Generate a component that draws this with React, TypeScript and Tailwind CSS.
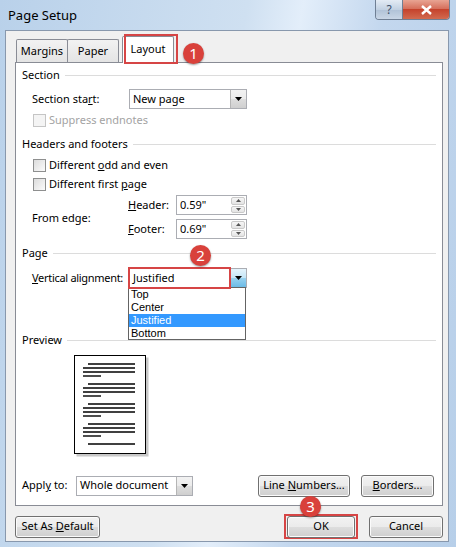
import React from "react";

// Win7-style push button
const Btn = ({ w, children, className = "" }: { w: string; children: React.ReactNode; className?: string }) => (
  <div
    className={`${w} h-[22px] flex items-center justify-center rounded-[3px] border border-[#707070] bg-[linear-gradient(#f2f2f2_0%,#ebebeb_50%,#dddddd_51%,#cfcfcf_100%)] shadow-[inset_0_0_0_1px_#fbfbfb] ${className}`}
  >
    <span>{children}</span>
  </div>
);

const Check = ({ label, disabled = false }: { label: React.ReactNode; disabled?: boolean }) => (
  <div className={`flex items-center h-[16px] ${disabled ? "text-[#a3a3a3]" : ""}`}>
    <div
      className={`w-[13px] h-[13px] border ${disabled ? "border-[#c5c5c5] bg-[#f4f4f4]" : "border-[#8e8f8f] bg-[linear-gradient(135deg,#dcdcdc,#fbfbfb)]"}`}
    />
    <span className="ml-[3px]">{label}</span>
  </div>
);

const Group = ({ label }: { label: string }) => (
  <div className="flex items-center h-[16px] pl-[6px] pr-[6px]">
    <span>{label}</span>
    <div className="flex-1 h-px bg-[#dcdcdc] ml-[5px]" />
  </div>
);

const Arrow = ({ active = false }: { active?: boolean }) => (
  <div
    className={`w-[16px] h-full flex items-center justify-center border-l ${
      active
        ? "border-[#3c7fb1] bg-[linear-gradient(#e5f4fc,#c4e5f6_50%,#98d1ef_51%,#6cbbe6)]"
        : "border-[#b5b5b5] bg-[linear-gradient(#f2f2f2,#ebebeb_50%,#dddddd_51%,#cfcfcf)]"
    }`}
  >
    <svg width="7" height="4" viewBox="0 0 7 4">
      <path d="M0 0H7L3.5 4Z" fill="#000" />
    </svg>
  </div>
);

const Select = ({ w, value, active = false }: { w: string; value: string; active?: boolean }) => (
  <div className={`${w} h-[20px] flex border border-[#abadb3] bg-white`}>
    <div className="flex-1 flex items-center pl-[3px]">{value}</div>
    <Arrow active={active} />
  </div>
);

const Spin = ({ value }: { value: string }) => (
  <div className="w-[71px] h-[20px] flex border border-[#abadb3] bg-white">
    <div className="flex-1 flex items-center pl-[3px]">{value}</div>
    <div className="w-[16px] flex flex-col gap-px p-px">
      {[0, 1].map((i) => (
        <div
          key={i}
          className="flex-1 flex items-center justify-center border border-[#c9c9c9] rounded-[2px] bg-[linear-gradient(#f6f6f6,#e4e4e4)]"
        >
          <svg width="5" height="3" viewBox="0 0 5 3">
            <path d={i === 0 ? "M0 3H5L2.5 0Z" : "M0 0H5L2.5 3Z"} fill="#555" />
          </svg>
        </div>
      ))}
    </div>
  </div>
);

const Badge = ({ n, className }: { n: number; className: string }) => (
  <div
    className={`absolute w-[21px] h-[21px] rounded-full bg-[#d9413b] text-white text-[15px] leading-none flex items-center justify-center shadow-[0_1px_2px_rgba(0,0,0,0.4)] ${className}`}
  >
    {n}
  </div>
);

const PreviewPage = () => {
  const rows: [number, number, number][] = [];
  for (let g = 0; g < 4; g++) {
    const y = 9 + g * 20;
    rows.push([14, 61, y], [9, 61, y + 4], [9, 61, y + 8], [9, 27, y + 12]);
  }
  rows.push([14, 61, 89]);
  return (
    <svg width="76" height="102" viewBox="0 0 76 102">
      <rect x="2.5" y="2.5" width="72" height="99" fill="#c8c8c8" />
      <rect x="0.5" y="0.5" width="71" height="98" fill="#fff" stroke="#000" />
      {rows.map(([a, b, y], i) => (
        <line key={i} x1={a} x2={b} y1={y} y2={y} stroke="#000" strokeWidth="1.4" />
      ))}
    </svg>
  );
};

export default function App() {
  return (
    <div className="relative w-[456px] h-[547px] overflow-hidden bg-[linear-gradient(100deg,#b9d1ea_0%,#cfe0f1_45%,#e3eefa_55%,#c3d7ee_70%,#b7cfe9_100%)] font-['Noto_Sans','Open_Sans',sans-serif] text-[11px] text-black">
      {/* title bar */}
      <div className="h-[30px] flex items-start">
        <div className="flex-1 pl-[8px] pt-[7px] text-[13px] leading-[16px]">Page Setup</div>
        <div className="flex mr-[6px] h-[20px] rounded-b-[4px] overflow-hidden border border-t-0 border-[#6f7f94]">
          <div className="w-[27px] flex items-center justify-center bg-[linear-gradient(#e3ebf4,#c2d1e2_50%,#b0c2d7_51%,#c9d6e6)] text-[12px] text-[#40506a] border-r border-[#6f7f94]">
            ?
          </div>
          <div className="w-[46px] flex items-center justify-center bg-[linear-gradient(#e8a493,#d6705c_45%,#c5432d_50%,#d26a4f)]">
            <svg width="11" height="10" viewBox="0 0 11 10">
              <path d="M1 1L10 9M10 1L1 9" stroke="#fff" strokeWidth="2.4" />
            </svg>
          </div>
        </div>
      </div>

      {/* dialog body */}
      <div className="ml-[5px] mr-[7px] h-[512px] bg-[#f0f0f0] border border-[#8898ad] pt-[5px]">
        {/* tabs */}
        <div className="h-[26px] flex items-end pl-[10px]">
          <div className="w-[52px] h-[23px] flex items-center justify-center border border-b-0 border-[#898c95] rounded-t-[2px] bg-[linear-gradient(#f2f2f2,#e4e4e4)]">
            Margins
          </div>
          <div className="w-[52px] h-[23px] -ml-px flex items-center justify-center border border-b-0 border-[#898c95] rounded-t-[2px] bg-[linear-gradient(#f2f2f2,#e4e4e4)]">
            Paper
          </div>
          <div className="relative z-10 w-[52px] h-[27px] -mb-px ml-[3px] flex items-center justify-center border border-b-0 border-[#898c95] rounded-t-[2px] bg-white pb-[2px]">
            Layout
          </div>
        </div>

        {/* tab panel */}
        <div className="relative ml-[9px] w-[428px] h-[444px] border border-[#898c95] bg-white pt-[4px]">
          <Group label="Section" />
          <div className="mt-[6px] flex items-center h-[20px]">
            <span className="pl-[16px] w-[113px]">
              Section sta<u>r</u>t:
            </span>
            <Select w="w-[118px]" value="New page" />
          </div>
          <div className="mt-[3px] pl-[17px]">
            <Check label="Suppress endnotes" disabled />
          </div>

          <div className="mt-[8px]">
            <Group label="Headers and footers" />
          </div>
          <div className="mt-[5px] pl-[17px]">
            <Check
              label={
                <>
                  Different <u>o</u>dd and even
                </>
              }
            />
          </div>
          <div className="mt-[3px] pl-[17px]">
            <Check
              label={
                <>
                  Different first <u>p</u>age
                </>
              }
            />
          </div>
          <div className="mt-[3px] flex items-center h-[44px]">
            <span className="pl-[16px] w-[112px] pt-[2px]">From edge:</span>
            <div className="flex flex-col gap-[4px]">
              <div className="flex items-center">
                <span className="w-[48px]">
                  <u>H</u>eader:
                </span>
                <Spin value={'0.59"'} />
              </div>
              <div className="flex items-center">
                <span className="w-[48px]">
                  <u>F</u>ooter:
                </span>
                <Spin value={'0.69"'} />
              </div>
            </div>
          </div>

          <div className="mt-[6px]">
            <Group label="Page" />
          </div>
          <div className="mt-[7px] flex items-center h-[20px]">
            <span className="pl-[16px] w-[113px] tracking-[-0.3px]">
              <u>V</u>ertical alignment:
            </span>
            <Select w="w-[118px]" value="Justified" active />
          </div>

          <div className="mt-[44px]">
            <Group label="Preview" />
          </div>
          <div className="mt-[7px] pl-[58px] h-[102px]">
            <PreviewPage />
          </div>

          <div className="mt-[18px] flex items-center h-[21px] pr-[8px]">
            <span className="pl-[6px] w-[60px]">
              Appl<u>y</u> to:
            </span>
            <Select w="w-[117px]" value="Whole document" />
            <div className="flex-1" />
            <Btn w="w-[92px]">
              Line <u>N</u>umbers...
            </Btn>
            <Btn w="w-[73px]" className="ml-[11px]">
              <u>B</u>orders...
            </Btn>
          </div>

          {/* open dropdown list */}
          <div className="absolute left-[112px] top-[224px] w-[118px] h-[53px] border border-[#646464] bg-white flex flex-col z-20 font-['Liberation_Sans',sans-serif] text-[11px] leading-[13px]">
            <div className="h-[13px] pl-[2px]">Top</div>
            <div className="h-[13px] pl-[2px]">Center</div>
            <div className="h-[13px] pl-[2px] bg-[#3399ff] text-white">Justified</div>
            <div className="h-[13px] pl-[2px]">Bottom</div>
          </div>
        </div>

        {/* footer buttons */}
        <div className="mt-[8px] flex items-center h-[25px] pr-[5px]">
          <Btn w="w-[85px]" className="ml-[9px]">
            Set As <u>D</u>efault
          </Btn>
          <div className="flex-1" />
          <div className="w-[74px] h-[25px] border-2 border-[#d64545] flex items-center justify-center">
            <Btn w="w-[68px]" className="h-[21px] border-[#3c7fb1]">
              OK
            </Btn>
          </div>
          <Btn w="w-[74px]" className="ml-[11px]">
            Cancel
          </Btn>
        </div>
      </div>

      {/* annotations */}
      <div className="absolute left-[124px] top-[34px] w-[54px] h-[30px] border-2 border-[#d64545] z-30" />
      <div className="absolute left-[128px] top-[267px] w-[103px] h-[22px] border-2 border-[#d64545] z-30" />
      <Badge n={1} className="left-[183px] top-[43px] z-40" />
      <Badge n={2} className="left-[190px] top-[245px] z-40" />
      <Badge n={3} className="left-[300px] top-[496px] z-40" />
    </div>
  );
}
